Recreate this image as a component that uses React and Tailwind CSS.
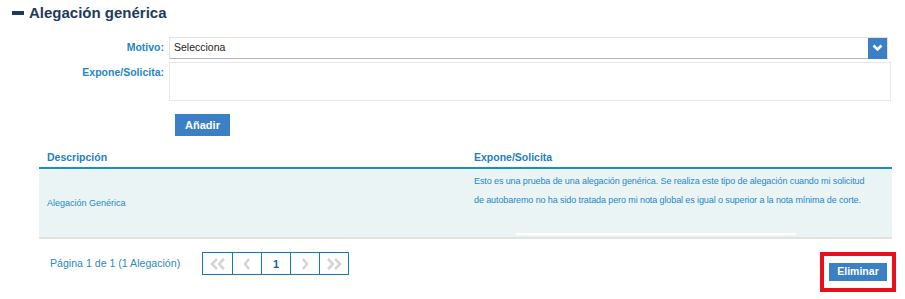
import React from 'react';

const Pager = () => (
    <div className="flex border border-[#1a78b4] h-[23px]">
        {['«', '‹', '1', '›', '»'].map((s, i) => (
            <div
                key={i}
                className={`w-[29px] flex items-center justify-center font-bold ${i > 0 ? 'border-l border-[#1a78b4]' : ''} ${s === '1' ? 'text-[#1f5f95] text-[11px]' : ''}`}
            >
                {s === '«' && (
                    <svg width="16" height="12" viewBox="0 0 16 12"><path d="M7 1 L2 6 L7 11 M14 1 L9 6 L14 11" stroke="#d4d4d4" strokeWidth="2.5" fill="none" /></svg>
                )}
                {s === '‹' && (
                    <svg width="8" height="12" viewBox="0 0 8 12"><path d="M6 1 L2 6 L6 11" stroke="#d4d4d4" strokeWidth="2.5" fill="none" /></svg>
                )}
                {s === '›' && (
                    <svg width="8" height="12" viewBox="0 0 8 12"><path d="M2 1 L6 6 L2 11" stroke="#d4d4d4" strokeWidth="2.5" fill="none" /></svg>
                )}
                {s === '»' && (
                    <svg width="16" height="12" viewBox="0 0 16 12"><path d="M2 1 L7 6 L2 11 M9 1 L14 6 L9 11" stroke="#d4d4d4" strokeWidth="2.5" fill="none" /></svg>
                )}
                {s === '1' && '1'}
            </div>
        ))}
    </div>
);

export default function App() {
    return (
        <div className="w-[905px] h-[299px] bg-white font-['Liberation_Sans',Arial,sans-serif] relative overflow-hidden">
            {/* Title */}
            <div className="flex items-center pl-[12px] pt-[2px] h-[24px]">
                <div className="w-[12px] h-[4px] bg-[#1e3a5c] mr-[5px]" />
                <h2 className="text-[15px] font-bold text-[#1e3a5c]">Alegación genérica</h2>
            </div>

            {/* Form */}
            <div className="mt-[13px] flex flex-col">
                <div className="flex items-center">
                    <label className="w-[164px] text-right text-[10.5px] font-bold text-[#1f87c6]">Motivo:</label>
                    <div className="ml-[5px] w-[719px] h-[22px] border border-[#e3e3e3] border-b-[#b5b5b5] flex items-center">
                        <span className="pl-[4px] text-[10.5px] text-[#222] flex-1">Selecciona</span>
                        <div className="w-[19px] h-[21px] bg-[#3b7fc4] flex items-center justify-center">
                            <svg width="11" height="8" viewBox="0 0 11 8"><path d="M1.5 1.5 L5.5 5.5 L9.5 1.5" stroke="#fff" strokeWidth="2.6" fill="none" /></svg>
                        </div>
                    </div>
                </div>
                <div className="flex items-start mt-[3px]">
                    <label className="w-[164px] text-right text-[10.5px] font-bold text-[#1f87c6] pt-[3px]">Expone/Solicita:</label>
                    <div className="ml-[5px] w-[722px] h-[39px] border border-[#e8e8e8]" />
                </div>
                <div className="pl-[175px] mt-[11px]">
                    <button className="w-[55px] h-[22px] bg-[#3b7fc4] text-white text-[11px] font-bold">Añadir</button>
                </div>
            </div>

            {/* Table */}
            <div className="ml-[39px] w-[853px] mt-[13px]">
                <div className="flex h-[20px] items-center border-b-2 border-[#1b8ccd]">
                    <div className="w-[435px] pl-[8px] text-[10.5px] font-bold text-[#1f7fbf]">Descripción</div>
                    <div className="text-[10.5px] font-bold text-[#1f7fbf]">Expone/Solicita</div>
                </div>
                <div className="flex h-[70px] bg-[#eaf4f5] border-b-2 border-[#e3e3de]">
                    <div className="w-[435px] pl-[8px] flex items-center text-[9px] text-[#1f87c6]">Alegación Genérica</div>
                    <div className="flex-1 pt-[3px] text-[9px] tracking-[-0.1px] leading-[19px] text-[#1f87c6] whitespace-nowrap">
                        Esto es una prueba de una alegación genérica. Se realiza este tipo de alegación cuando mi solicitud
                        <br />
                        de autobaremo no ha sido tratada pero mi nota global es igual o superior a la nota mínima de corte.
                    </div>
                </div>
            </div>

            {/* Footer */}
            <div className="flex items-start mt-[13px]">
                <div className="flex items-center ml-[50px] h-[23px]">
                    <span className="text-[10.6px] text-[#2a8ac6] w-[152px]">Página 1 de 1 (1 Alegación)</span>
                    <Pager />
                </div>
                <div className="ml-auto mr-[9px] border-4 border-[#e8101a] w-[76px] h-[40px] flex items-center justify-center">
                    <button className="w-[58px] h-[18px] bg-[#3b7fc4] text-white text-[10.5px] font-bold">Eliminar</button>
                </div>
            </div>

            {/* rendering artifact over the row */}
            <div className="absolute left-[516px] top-[233px] w-[280px] h-[2px] bg-white" />
        </div>
    );
}
